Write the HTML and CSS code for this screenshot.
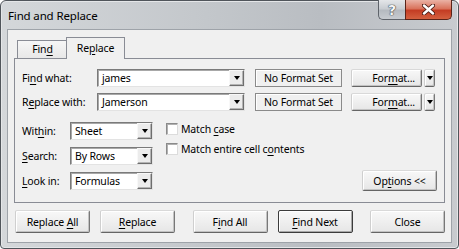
FILE: index.html
```html
<!DOCTYPE html>
<html lang="en">
<head>
  <meta charset="UTF-8">
  <title>Find and Replace</title>
  <link rel="stylesheet" href="styles.css">
</head>
<body>
  <div class="window">
    <div class="titlebar">
      <span class="title">Find and Replace</span>
      <div class="caption">
        <span class="cap help">?</span>
        <span class="cap close">
          <svg width="13" height="11" viewBox="0 0 13 11">
            <path d="M2 1.5 L11 9.5 M11 1.5 L2 9.5" stroke="#4a1a12" stroke-width="4.2" stroke-linecap="round"/>
            <path d="M2 1.5 L11 9.5 M11 1.5 L2 9.5" stroke="#fff" stroke-width="2.4" stroke-linecap="round"/>
          </svg>
        </span>
      </div>
    </div>

    <div class="client">
      <div class="tabs">
        <div class="tab">Fin<u>d</u></div>
        <div class="tab active">Re<u>p</u>lace</div>
      </div>

      <div class="panel">
        <div class="find-rows">
          <label class="lbl">Fi<u>n</u>d what:</label>
          <div class="combo wide"><span class="val">james</span><span class="drop"><i class="tri"></i></span></div>
          <div class="noformat">No Format Set</div>
          <div class="split">
            <button class="btn fmt">For<u>m</u>at...</button>
            <button class="btn fmt-arrow"><i class="tri"></i></button>
          </div>

          <label class="lbl">R<u>e</u>place with:</label>
          <div class="combo wide"><span class="val">Jamerson</span><span class="drop"><i class="tri"></i></span></div>
          <div class="noformat">No Format Set</div>
          <div class="split">
            <button class="btn fmt">For<u>m</u>at...</button>
            <button class="btn fmt-arrow"><i class="tri"></i></button>
          </div>
        </div>

        <div class="options">
          <div class="opt-grid">
            <label class="lbl">Wit<u>h</u>in:</label>
            <div class="combo short"><span class="val">Sheet</span><span class="drop"><i class="tri"></i></span></div>
            <label class="lbl"><u>S</u>earch:</label>
            <div class="combo short"><span class="val">By Rows</span><span class="drop"><i class="tri"></i></span></div>
            <label class="lbl"><u>L</u>ook in:</label>
            <div class="combo short"><span class="val">Formulas</span><span class="drop"><i class="tri"></i></span></div>
          </div>

          <div class="checks">
            <label class="check"><span class="box"></span><span>Match <u>c</u>ase</span></label>
            <label class="check"><span class="box"></span><span>Match entire cell c<u>o</u>ntents</span></label>
          </div>

          <button class="btn options-btn">Op<u>t</u>ions &lt;&lt;</button>
        </div>
      </div>

      <div class="actions">
        <div class="group">
          <button class="btn action">Replace <u>A</u>ll</button>
          <button class="btn action"><u>R</u>eplace</button>
        </div>
        <div class="group">
          <button class="btn action">F<u>i</u>nd All</button>
          <button class="btn action default"><u>F</u>ind Next</button>
        </div>
        <div class="group">
          <button class="btn action">Close</button>
        </div>
      </div>
    </div>
  </div>
</body>
</html>
```

FILE: styles.css
```css
* {
  box-sizing: border-box;
}
body {
  margin: 0;
  font-family: "Noto Sans", "Open Sans", sans-serif;
  font-size: 10.5px;
  letter-spacing: -0.15px;
  color: #000;
  background: #fff;
}
u {
  text-decoration-thickness: 1px;
  text-underline-offset: 2px;
}

/* window frame */
.window {
  width: 459px;
  height: 249px;
  border: 1px solid #50555b;
  border-radius: 6px 6px 4px 4px;
  padding: 0 6px 5px 6px;
  display: flex;
  flex-direction: column;
  background: linear-gradient(to right, #d4d7da, #c3c7cb 45%, #b9bdc2 70%, #c8cbcf);
  box-shadow: inset 0 0 0 1px #e4e6e8;
}
.titlebar {
  height: 28px;
  display: flex;
  justify-content: space-between;
  align-items: flex-start;
  padding: 0 0 0 1px;
}
.title {
  font-size: 11.5px;
  line-height: 29px;
  color: #000;
}
.caption {
  display: flex;
  margin-top: -1px;
}
.cap {
  height: 20px;
  display: flex;
  align-items: center;
  justify-content: center;
  border: 1px solid #5e636a;
  border-top: none;
}
.help {
  width: 27px;
  border-right: none;
  border-radius: 0 0 0 5px;
  background: linear-gradient(#e4e6e9, #c9cdd2 45%, #b5bac0 55%, #c7cbd0);
  font-family: "DejaVu Sans", sans-serif;
  font-weight: bold;
  font-size: 14px;
  color: #f4f5f6;
  text-shadow: 0 0 1px #3c4046, 0 0 1px #3c4046, 0 0 1px #3c4046;
}
.close {
  width: 47px;
  border-color: #5a2318;
  border-radius: 0 0 5px 0;
  background: linear-gradient(#eab2a5, #d9735c 45%, #c43d24 55%, #d4603f);
}

/* client area */
.client {
  flex: 1;
  background: #f0f0f0;
  border: 1px solid #9ea3a9;
  display: flex;
  flex-direction: column;
}
.tabs {
  height: 28px;
  display: flex;
  align-items: flex-end;
  padding-left: 9px;
}
.tab {
  width: 51px;
  height: 18px;
  border: 1px solid #898c95;
  border-bottom: none;
  background: linear-gradient(#f6f6f6, #e8e8e8);
  text-align: center;
  line-height: 17px;
}
.tab.active {
  width: 59px;
  height: 22px;
  margin-left: -2px;
  margin-bottom: -1px;
  position: relative;
  z-index: 1;
  background: #f0f0f0;
  line-height: 21px;
}
.panel {
  height: 145px;
  margin: 0 6px;
  border: 1px solid #898c95;
  padding: 10px 7px 0 7px;
}

/* find / replace rows */
.find-rows {
  display: grid;
  grid-template-columns: 75px 158px 96px 84px;
  grid-auto-rows: 18px;
  row-gap: 6px;
  align-items: center;
}
.lbl {
  white-space: nowrap;
}
.combo {
  height: 18px;
  display: flex;
  align-items: center;
  background: #fff;
  border: 1px solid;
  border-color: #7a7a7a #e3e3e3 #e3e3e3 #7a7a7a;
  box-shadow: inset 1px 1px #a8a8a8;
}
.combo.wide {
  width: 148px;
}
.combo.short {
  width: 83px;
}
.val {
  flex: 1;
  padding-left: 4px;
  white-space: nowrap;
}
.drop {
  width: 15px;
  height: 16px;
  display: flex;
  align-items: center;
  justify-content: center;
  background: #ececec;
  border: 1px solid;
  border-color: #f8f8f8 #6e6e6e #6e6e6e #f8f8f8;
  box-shadow: inset -1px -1px #b4b4b4;
}
.tri {
  width: 0;
  height: 0;
  border-left: 3.5px solid transparent;
  border-right: 3.5px solid transparent;
  border-top: 4px solid #000;
}
.noformat {
  width: 87px;
  height: 18px;
  border: 1px solid #8a8a8a;
  box-shadow: inset 1px 1px #fff;
  text-align: center;
  line-height: 16px;
}
.split {
  display: flex;
  gap: 2px;
  height: 18px;
}

/* buttons */
.btn {
  font: inherit;
  letter-spacing: inherit;
  color: #000;
  padding: 0;
  border: 1px solid;
  border-color: #d9d9d9 #787878 #656565 #cfcfcf;
  border-radius: 2px;
  background: linear-gradient(#f8f8f8, #e6e6e6);
  box-shadow: inset 1px 1px #fff, inset -1px -1px #c2c2c2;
}
.fmt {
  width: 71px;
  height: 18px;
  text-align: right;
  padding-right: 6px;
}
.fmt-arrow {
  width: 11px;
  height: 18px;
  display: flex;
  align-items: center;
  justify-content: center;
}

/* search options */
.options {
  display: flex;
  margin-top: 11px;
}
.opt-grid {
  display: grid;
  grid-template-columns: 48px 83px;
  grid-auto-rows: 18px;
  row-gap: 7px;
  align-items: center;
}
.checks {
  display: flex;
  flex-direction: column;
  gap: 8px;
  margin-left: 13px;
  margin-top: 1px;
}
.check {
  height: 12px;
  display: flex;
  align-items: center;
  white-space: nowrap;
}
.box {
  width: 12px;
  height: 12px;
  margin-right: 3px;
  background: #fff;
  border: 1px solid;
  border-color: #8a8a8a #dcdcdc #dcdcdc #8a8a8a;
  box-shadow: inset 1px 1px #b0b0b0;
}
.options-btn {
  width: 75px;
  height: 21px;
  margin-left: auto;
  align-self: flex-end;
  margin-bottom: -1px;
}

/* dialog actions */
.actions {
  display: flex;
  justify-content: space-between;
  margin-top: 7px;
  padding: 0 6px 0 7px;
}
.group {
  display: flex;
  gap: 10px;
}
.action {
  width: 75px;
  height: 23px;
}
.action.default {
  border-color: #3c3c3c;
  box-shadow: inset 1px 1px #fff, inset -1px -1px #a8a8a8, inset 0 0 0 1px #d0d0d0;
}
```
